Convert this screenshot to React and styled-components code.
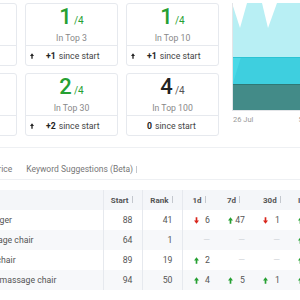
import React from 'react';
import styled, { createGlobalStyle } from 'styled-components';

const GREEN = '#26a032';
const RED = '#d9261c';
const BORDER = '#e6e9ee';

const GlobalStyle = createGlobalStyle`
  html, body {
    margin: 0;
    padding: 0;
    background: #fff;
    overflow: hidden;
  }
  body {
    font-family: Roboto, "Liberation Sans", sans-serif;
    color: #444;
  }
`;

const Page = styled.div`
  width: 440px;
  margin-left: -100px;
  padding-top: 3px;
`;

const TopRow = styled.div`
  display: flex;
  align-items: flex-start;
`;

const CardGrid = styled.div`
  display: grid;
  grid-template-columns: repeat(3, 93px);
  grid-auto-rows: 63px;
  gap: 7px 8px;
  margin-left: 24px;
`;

const Card = styled.div`
  box-sizing: border-box;
  border: 1px solid ${BORDER};
  border-radius: 3px;
  display: flex;
  flex-direction: column;
  background: #fff;
`;

const CardBody = styled.div`
  height: 41px;
  box-sizing: border-box;
  padding-top: 2px;
  display: flex;
  flex-direction: column;
  align-items: center;
`;

const Score = styled.div`
  display: flex;
  align-items: baseline;
  line-height: 22px;
  color: ${p => (p.$dark ? '#222' : GREEN)};
`;

const ScoreValue = styled.span`
  font-size: 22px;
  font-weight: 500;
`;

const ScoreTotal = styled.span`
  font-size: 10px;
  margin-left: 2px;
  color: ${p => (p.$dark ? '#555' : GREEN)};
`;

const ScoreLabel = styled.div`
  font-size: 8.7px;
  line-height: 11px;
  margin-top: 1px;
  color: #888;
`;

const CardFooter = styled.div`
  height: 20px;
  box-sizing: border-box;
  border-top: 1px solid ${BORDER};
  display: flex;
  align-items: center;
  padding-left: 4px;
  font-size: 8.7px;
  color: #444;
`;

const IconSlot = styled.span`
  width: 16px;
  display: flex;
  align-items: center;
`;

const Delta = styled.b`
  font-weight: 700;
  color: #222;
  margin-right: 3px;
`;

const ChartPanel = styled.div`
  margin-left: 13px;
  width: 120px;

  svg {
    display: block;
  }
`;

const ChartLabels = styled.div`
  display: flex;
  gap: 45px;
  padding-left: 1px;
  margin-top: 4px;
  font-size: 7.5px;
  line-height: 9px;
  color: #999;
`;

const TabBar = styled.div`
  margin-top: 11px;
  height: 33px;
  box-sizing: border-box;
  border-top: 1px solid #eef0f3;
  border-bottom: 1px solid #eef0f3;
  display: flex;
  align-items: flex-end;
  gap: 14px;
  padding: 0 0 5px 93px;
  font-size: 8.5px;
  line-height: 10px;
  color: #777;
`;

const Tab = styled.span`
  display: flex;
  align-items: center;
  white-space: nowrap;
`;

const SortMark = styled.span`
  display: inline-block;
  width: 1px;
  height: 7px;
  margin-left: 3px;
  background: #c4c8ce;
`;

const Table = styled.table`
  margin: 10px 0 0 43px;
  border-collapse: collapse;
  table-layout: fixed;
  font-size: 8.7px;
  color: #555;
`;

const HeadCell = styled.th`
  height: 20px;
  padding: 0 ${p => (p.$align === 'right' ? '9px' : '0')} 0 ${p => (p.$align === 'right' ? '0' : p.$pad || '10px')};
  background: #f4f6f9;
  font-size: 8px;
  font-weight: 700;
  color: #555;
  text-align: ${p => p.$align || 'left'};
  white-space: nowrap;
  border-right: ${p => (p.$divider ? `1px solid ${BORDER}` : 'none')};
`;

const Row = styled.tr`
  background: ${p => (p.$striped ? '#f7f8fa' : '#fff')};
`;

const Cell = styled.td`
  height: 20px;
  padding: 0 ${p => (p.$align === 'right' ? '9px' : '0')} 0 ${p => (p.$align === 'right' ? '0' : '10px')};
  text-align: ${p => p.$align || 'left'};
  white-space: nowrap;
  overflow: hidden;
  border-right: ${p => (p.$divider ? `1px solid ${BORDER}` : 'none')};
`;

const ChangeCell = styled.td`
  height: 20px;
  padding: 0 7px 0 11px;
`;

const ChangeInner = styled.div`
  display: flex;
  align-items: center;
  justify-content: ${p => (p.$empty ? 'flex-end' : 'space-between')};
`;

const Dash = styled.span`
  color: #d3d6db;
`;

const Arrow = ({ dir = 'up', color = '#222', w = 5, h = 7 }) => (
  <svg width={w} height={h} viewBox="0 0 6 8">
    <path
      d="M3 0 L6 4 H4 V8 H2 V4 H0 Z"
      fill={color}
      transform={dir === 'down' ? 'rotate(180 3 4)' : undefined}
    />
  </svg>
);

const TrendChart = () => (
  <svg width="120" height="108" viewBox="0 0 120 108">
    <rect x="0" y="0" width="120" height="54" fill="#b8eff4" />
    <polygon points="0,0 8,25 15,0" fill="#fff" />
    <polygon points="30,0 36,25 45,0" fill="#fff" />
    <rect x="0" y="54" width="120" height="27" fill="#3ecfdf" />
    <polygon points="0,54 9,54 1,80 0,80" fill="#4ad9e7" />
    <rect x="0" y="81" width="120" height="26" fill="#438b88" />
    <line x1="0" y1="54.5" x2="120" y2="54.5" stroke="#2cc3d3" />
    <line x1="0" y1="81.5" x2="120" y2="81.5" stroke="#2f7875" />
    <line x1="0.5" y1="0" x2="0.5" y2="107" stroke="#e3e5e8" />
    <line x1="0" y1="107.5" x2="120" y2="107.5" stroke="#e3e5e8" />
  </svg>
);

const cards = [
  { value: 4, label: 'Tracked', delta: '+0', dark: true },
  { value: 1, label: 'In Top 3', delta: '+1' },
  { value: 1, label: 'In Top 10', delta: '+1' },
  { value: 3, label: 'In Top 20', delta: '+1' },
  { value: 2, label: 'In Top 30', delta: '+2' },
  { value: 4, label: 'In Top 100', delta: '0', dark: true, flat: true },
];

const keywords = [
  { name: 'neck massager', start: 88, rank: 41, changes: [[-1, 6], [1, 47], [-1, 1], [1, 2]] },
  { name: 'office massage chair', start: 64, rank: 1, changes: [null, null, null, [1, 1]] },
  { name: 'ergonomic chair', start: 89, rank: 19, changes: [[1, 2], null, null, [1, 3]] },
  { name: 'zero gravity massage chair', start: 94, rank: 50, changes: [[1, 4], [1, 5], [1, 1], [1, 2]] },
];

const StatCard = ({ card }) => (
  <Card>
    <CardBody>
      <Score $dark={card.dark}>
        <ScoreValue>{card.value}</ScoreValue>
        <ScoreTotal $dark={card.dark}>/4</ScoreTotal>
      </Score>
      <ScoreLabel>{card.label}</ScoreLabel>
    </CardBody>
    <CardFooter>
      <IconSlot>{!card.flat && <Arrow w={4} h={6} />}</IconSlot>
      <Delta>{card.delta}</Delta>
      since start
    </CardFooter>
  </Card>
);

const Change = ({ change }) => (
  <ChangeCell>
    {change ? (
      <ChangeInner>
        <Arrow dir={change[0] > 0 ? 'up' : 'down'} color={change[0] > 0 ? GREEN : RED} w={5} h={7} />
        <span>{change[1]}</span>
      </ChangeInner>
    ) : (
      <ChangeInner $empty>
        <Dash>—</Dash>
      </ChangeInner>
    )}
  </ChangeCell>
);

export default function App() {
  return (
    <>
      <GlobalStyle />
      <Page>
        <TopRow>
          <CardGrid>
            {cards.map((c, i) => (
              <StatCard key={i} card={c} />
            ))}
          </CardGrid>
          <ChartPanel>
            <TrendChart />
            <ChartLabels>
              <span>26 Jul</span>
              <span>5 Aug</span>
            </ChartLabels>
          </ChartPanel>
        </TopRow>

        <TabBar>
          <Tab>Price</Tab>
          <Tab>
            Keyword Suggestions (Beta)
            <SortMark />
          </Tab>
        </TabBar>

        <Table>
          <colgroup>
            <col style={{ width: 160 }} />
            <col style={{ width: 39 }} />
            <col style={{ width: 40 }} />
            <col style={{ width: 35 }} />
            <col style={{ width: 35 }} />
            <col style={{ width: 35 }} />
            <col style={{ width: 35 }} />
          </colgroup>
          <thead>
            <tr>
              <HeadCell $divider>Keyword</HeadCell>
              <HeadCell $align="right" $divider>Start<SortMark /></HeadCell>
              <HeadCell $align="right" $divider>Rank<SortMark /></HeadCell>
              <HeadCell>1d<SortMark /></HeadCell>
              <HeadCell>7d<SortMark /></HeadCell>
              <HeadCell $pad="11px">30d<SortMark /></HeadCell>
              <HeadCell $pad="11px">Index<SortMark /></HeadCell>
            </tr>
          </thead>
          <tbody>
            {keywords.map((k, i) => (
              <Row key={k.name} $striped={i % 2 === 1}>
                <Cell $divider>{k.name}</Cell>
                <Cell $align="right" $divider>{k.start}</Cell>
                <Cell $align="right" $divider>{k.rank}</Cell>
                {k.changes.map((c, j) => (
                  <Change key={j} change={c} />
                ))}
              </Row>
            ))}
          </tbody>
        </Table>
      </Page>
    </>
  );
}
